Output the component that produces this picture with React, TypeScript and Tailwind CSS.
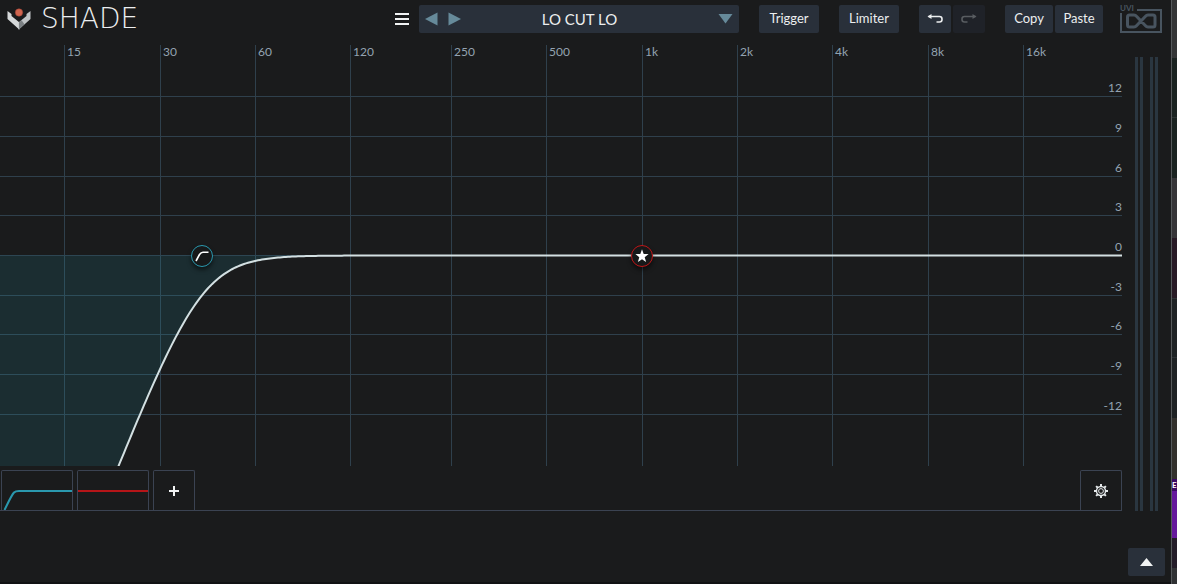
import React from "react";
import clsx from "clsx";

const GRAPH_W = 1122;
const GRAPH_H = 421;
const ZERO_Y = 210.5;
const PX_PER_DB = 13.23;
const PX_PER_OCTAVE = 95.4;

const frequencies = [
  { x: 64.5, label: "15" },
  { x: 160.5, label: "30" },
  { x: 255.5, label: "60" },
  { x: 350.5, label: "120" },
  { x: 451.5, label: "250" },
  { x: 546.5, label: "500" },
  { x: 642.5, label: "1k" },
  { x: 737.5, label: "2k" },
  { x: 832.5, label: "4k" },
  { x: 928.5, label: "8k" },
  { x: 1023.5, label: "16k" },
];

const gains = [
  { y: 51.5, label: "12" },
  { y: 91.5, label: "9" },
  { y: 131.5, label: "6" },
  { y: 170.5, label: "3" },
  { y: 210.5, label: "0" },
  { y: 250.5, label: "-3" },
  { y: 289.5, label: "-6" },
  { y: 329.5, label: "-9" },
  { y: 369.5, label: "-12" },
];

// 18 dB/oct low cut
function cutResponse(cutoffX: number) {
  const points: string[] = [];
  for (let x = 112; x <= GRAPH_W; x += 2) {
    const octaves = (cutoffX - x) / PX_PER_OCTAVE;
    const db = 10 * Math.log10(1 + Math.pow(2, 6 * octaves));
    points.push(`${x},${(ZERO_Y + db * PX_PER_DB).toFixed(2)}`);
  }
  return points.join(" ");
}

const curve = cutResponse(202);

function ToolButton({
  children,
  className,
  label,
  disabled,
}: {
  children: React.ReactNode;
  className?: string;
  label?: string;
  disabled?: boolean;
}) {
  return (
    <button
      type="button"
      aria-label={label}
      disabled={disabled}
      className={clsx(
        "flex h-7 shrink-0 items-center justify-center rounded-xs text-[13px] text-[#eceeef]",
        disabled ? "bg-[#1f2228]" : "bg-[#29303a]",
        className
      )}
    >
      {children}
    </button>
  );
}

function BrandLogo() {
  return (
    <div className="flex h-7 items-center gap-2.5">
      <svg width="24" height="22" viewBox="0 0 24 22" aria-hidden="true">
        <path d="M0.5 3 L4.5 6 V8 L12.5 14.5 V21.8 L0.5 11 Z" fill="#d5d8d9" />
        <path d="M23.5 3 L19.5 6 V8 L11.5 14.5 V21.8 L23.5 11 Z" fill="#bfc3c5" />
        <path d="M12 14.2 L14.6 12.2 L17.5 16.3 L12 21.3 Z" fill="#7b8083" />
        <circle cx="12" cy="4.5" r="3.7" fill="#d0654f" stroke="#9c4033" strokeWidth="0.5" />
      </svg>
      <span className="font-['DejaVu_Sans',sans-serif] text-[28px] leading-7 font-extralight text-[#eceeef]">
        SHADE
      </span>
    </div>
  );
}

function UviLogo() {
  return (
    <svg width="42" height="28" viewBox="0 0 42 28" role="img" aria-label="UVI" className="shrink-0 overflow-visible">
      <text x="0" y="6" fontSize="8" fontWeight="bold" fill="#48545f">
        UVI
      </text>
      <path d="M17 5 H41 V27 H1 V8" fill="none" stroke="#48545f" strokeWidth="2" />
      <path
        d="M21 16 L16.5 11.2 Q15.5 10 14 10 H9.5 Q7.5 10 7.5 12 V20 Q7.5 22 9.5 22 H14 Q15.5 22 16.5 20.8 L25.5 11.2 Q26.5 10 28 10 H33 Q35 10 35 12 V20 Q35 22 33 22 H28 Q26.5 22 25.5 20.8 Z"
        fill="none"
        stroke="#48545f"
        strokeWidth="3"
      />
    </svg>
  );
}

function Header() {
  return (
    <header className="flex items-center justify-between pt-[5px] pr-[9px] pl-[7px]">
      <BrandLogo />
      <div className="flex items-center gap-5">
        <div className="flex items-center gap-2.5">
          <button type="button" aria-label="Menu" className="flex w-3.5 flex-col gap-[3px]">
            <span className="h-0.5 w-full bg-[#f1f3f3]" />
            <span className="h-0.5 w-full bg-[#f1f3f3]" />
            <span className="h-0.5 w-full bg-[#f1f3f3]" />
          </button>
          <div className="flex h-7 w-80 items-center rounded-xs bg-[#29303a] px-1.5 text-[#668a9a]">
            <button type="button" aria-label="Previous preset">
              <svg width="13" height="14" viewBox="0 0 13 14" fill="currentColor">
                <path d="M12.5 0.5 V13.5 L0 7 Z" />
              </svg>
            </button>
            <button type="button" aria-label="Next preset" className="ml-2.5">
              <svg width="13" height="14" viewBox="0 0 13 14" fill="currentColor">
                <path d="M0.5 0.5 V13.5 L13 7 Z" />
              </svg>
            </button>
            <button type="button" className="flex-1 pr-5 text-center text-[15px] text-[#eceeef]">
              LO CUT LO
            </button>
            <button type="button" aria-label="Preset list">
              <svg width="15" height="10" viewBox="0 0 15 10" fill="currentColor">
                <path d="M0.5 0 H14.5 L7.5 9.5 Z" />
              </svg>
            </button>
          </div>
        </div>
        <ToolButton className="w-15">Trigger</ToolButton>
        <ToolButton className="w-15">Limiter</ToolButton>
        <div className="flex gap-0.5">
          <ToolButton label="Undo" className="w-8">
            <svg width="16" height="10" viewBox="0 0 16 10" fill="none" stroke="#eceeef" strokeWidth="1.6">
              <path d="M1.5 2.5 H12.5 Q15 2.5 15 5 V5.5 Q15 8 12.5 8 H9.5" />
              <path d="M4.5 0 L0.5 2.5 L4.5 5 Z" fill="#eceeef" stroke="none" />
            </svg>
          </ToolButton>
          <ToolButton label="Redo" className="w-8" disabled>
            <svg width="16" height="10" viewBox="0 0 16 10" fill="none" stroke="#595d61" strokeWidth="1.6">
              <path d="M14.5 2.5 H3.5 Q1 2.5 1 5 V5.5 Q1 8 3.5 8 H6.5" />
              <path d="M11.5 0 L15.5 2.5 L11.5 5 Z" fill="#595d61" stroke="none" />
            </svg>
          </ToolButton>
        </div>
        <div className="flex items-center gap-[17px]">
          <div className="flex gap-0.5">
            <ToolButton className="w-12">Copy</ToolButton>
            <ToolButton className="w-12">Paste</ToolButton>
          </div>
          <UviLogo />
        </div>
      </div>
    </header>
  );
}

function Graph() {
  return (
    <div className="relative">
      <svg
        viewBox={`0 0 ${GRAPH_W} ${GRAPH_H}`}
        className="block w-full overflow-visible"
        role="img"
        aria-label="EQ curve"
      >
        <defs>
          <clipPath id="plot">
            <rect width={GRAPH_W} height={GRAPH_H} />
          </clipPath>
        </defs>
        <g stroke="#2f404c">
          {frequencies.map(({ x, label }) => (
            <line key={label} x1={x} x2={x} y1="0" y2={GRAPH_H} />
          ))}
          {gains.map(({ y, label }) => (
            <line key={label} x1="0" x2={GRAPH_W} y1={y} y2={y} />
          ))}
        </g>
        <g clipPath="url(#plot)">
          <polygon
            points={`0,${GRAPH_H} 0,${ZERO_Y} ${GRAPH_W},${ZERO_Y} ${curve.split(" ").reverse().join(" ")}`}
            fill="#2197ad"
            fillOpacity="0.15"
          />
          <polyline points={curve} fill="none" stroke="#d3e0e2" strokeWidth="2" />
        </g>
        <g fill="#93a3b1" fontSize="12">
          {frequencies.map(({ x, label }) => (
            <text key={label} x={x + 2.5} y="11">
              {label}
            </text>
          ))}
          {gains.map(({ y, label }) => (
            <text key={label} x={GRAPH_W} y={y - 4.5} textAnchor="end">
              {label}
            </text>
          ))}
        </g>
      </svg>
      <button
        type="button"
        aria-label="Low cut band"
        className="absolute top-1/2 left-[18%] flex size-[22px] -translate-1/2 items-center justify-center rounded-full border border-[#2a98ae] bg-[#17191a] shadow-[0_3px_4px_rgba(0,0,0,0.5)]"
      >
        <svg width="14" height="12" viewBox="0 0 14 12" fill="none" stroke="#fff" strokeWidth="1.6">
          <path d="M1 11 L4.5 4.5 Q6 2.2 8 2.2 H13.5" />
        </svg>
      </button>
      <button
        type="button"
        aria-label="Bell band"
        className="absolute top-1/2 left-[57.2%] flex size-[22px] -translate-1/2 items-center justify-center rounded-full border border-[#c01618] bg-[#17191a] shadow-[0_3px_4px_rgba(0,0,0,0.5)]"
      >
        <svg width="14" height="14" viewBox="0 0 14 14" fill="#fff">
          <path d="M7 0.3 L8.7 5 L13.6 5.1 L9.7 8.2 L11.1 13 L7 10.2 L2.9 13 L4.3 8.2 L0.4 5.1 L5.3 5 Z" />
        </svg>
      </button>
    </div>
  );
}

function BandTabs() {
  const tab = "h-10 rounded-t-xs border border-b-0 border-[#3b4352]";
  return (
    <div className="mt-1 flex border-b border-[#3b4352] pl-px">
      <div className="flex gap-1">
        <button type="button" aria-label="Band 1" className={clsx(tab, "w-18")}>
          <svg width="70" height="39" viewBox="0 0 70 39" fill="none" stroke="#2a98ae" strokeWidth="2">
            <path d="M2.5 39 C6 32 9 25 12 21.5 Q13.5 20 17 20 H70" />
          </svg>
        </button>
        <button type="button" aria-label="Band 2" className={clsx(tab, "w-18")}>
          <svg width="70" height="39" viewBox="0 0 70 39" stroke="#b61518" strokeWidth="2">
            <path d="M0 20 H70" />
          </svg>
        </button>
        <button type="button" aria-label="Add band" className={clsx(tab, "flex w-[42px] items-center justify-center")}>
          <svg width="10" height="10" viewBox="0 0 10 10" stroke="#f1f3f3" strokeWidth="2">
            <path d="M5 0 V10 M0 5 H10" />
          </svg>
        </button>
      </div>
      <button type="button" aria-label="Settings" className={clsx(tab, "ml-auto flex w-[42px] items-center justify-center")}>
        <svg width="14" height="14" viewBox="0 0 14 14" fill="none" stroke="#e4e8ea">
          <circle cx="7" cy="7" r="4.5" strokeWidth="1.4" />
          <circle cx="7" cy="7" r="2.4" strokeWidth="1" />
          <path
            d="M7 0 V2.5 M7 11.5 V14 M0 7 H2.5 M11.5 7 H14 M2.1 2.1 L3.8 3.8 M10.2 10.2 L11.9 11.9 M11.9 2.1 L10.2 3.8 M3.8 10.2 L2.1 11.9"
            strokeWidth="2"
          />
        </svg>
      </button>
    </div>
  );
}

function Meters() {
  return (
    <div className="mt-3 flex gap-[7px]" aria-hidden="true">
      {["in", "out"].map((name) => (
        <div key={name} className="flex gap-0.5">
          <span className="w-[3px] bg-[#2a3640]" />
          <span className="w-[3px] bg-[#2a3640]" />
        </div>
      ))}
    </div>
  );
}

// sliver of the host session behind the plugin window
function HostEdge() {
  return (
    <aside className="flex w-1.5 shrink-0 flex-col overflow-hidden border-l border-[#55595b]">
      <div className="h-[58px] bg-[#343536]" />
      <div className="h-15 border-b border-[#2c3432] bg-[#1b2321]" />
      <div className="h-15 bg-[#1b2321]" />
      <div className="h-15 bg-[#363538]" />
      <div className="h-15 bg-[#281a25]" />
      <div className="h-15 border-y border-[#2d3134] bg-[#1e2224]" />
      <div className="h-15 bg-[#1e2224]" />
      <div className="h-[61px] bg-[#33312d]" />
      <div className="h-3 bg-[#3a0a63] text-[8px] leading-3 font-bold text-white">E</div>
      <div className="h-[47px] bg-[#65189c]" />
      <div className="h-[30px] bg-[#231c28]" />
      <div className="flex-1 bg-[#303234]" />
    </aside>
  );
}

export default function App() {
  return (
    <div className="flex min-h-screen bg-[#1a1b1c] font-[Lato,sans-serif] text-[#eceeef]">
      <main className="flex min-w-0 flex-1 flex-col border-b-2 border-[#111214]">
        <Header />
        <div className="mt-3 flex gap-[13px] pr-[13px]">
          <div className="min-w-0 flex-1">
            <Graph />
            <BandTabs />
          </div>
          <Meters />
        </div>
        <div className="mt-auto flex justify-end pr-1.5 pb-1.5">
          <ToolButton label="Expand" className="w-[37px]">
            <svg width="13" height="8" viewBox="0 0 13 8" fill="#f1f3f3">
              <path d="M6.5 0 L13 8 H0 Z" />
            </svg>
          </ToolButton>
        </div>
      </main>
      <HostEdge />
    </div>
  );
}
